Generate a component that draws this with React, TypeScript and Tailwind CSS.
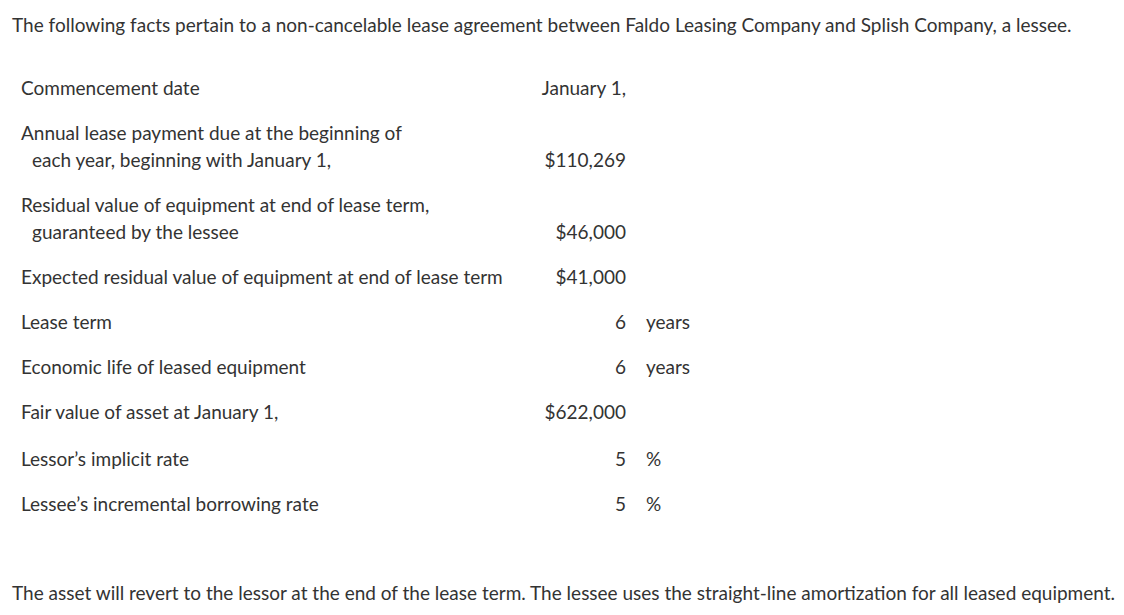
import React from "react";

type Row = {
  label: string[];
  value: string;
  unit?: string;
  extra?: boolean;
};

const rows: Row[] = [
  { label: ["Commencement date"], value: "January 1," },
  { label: ["Annual lease payment due at the beginning of", "each year, beginning with January 1,"], value: "$110,269" },
  { label: ["Residual value of equipment at end of lease term,", "guaranteed by the lessee"], value: "$46,000" },
  { label: ["Expected residual value of equipment at end of lease term"], value: "$41,000" },
  { label: ["Lease term"], value: "6", unit: "years" },
  { label: ["Economic life of leased equipment"], value: "6", unit: "years" },
  { label: ["Fair value of asset at January 1,"], value: "$622,000" },
  { label: ["Lessor\u2019s implicit rate"], value: "5", unit: "%", extra: true },
  { label: ["Lessee\u2019s incremental borrowing rate"], value: "5", unit: "%" },
];

const App = () => {
  return (
    <div className="w-[1124px] h-[615px] bg-white text-[#333333] text-[19px] leading-[27px] font-['Lato','Liberation_Sans',sans-serif] px-3 pt-[11px]">
      <p className="whitespace-nowrap">
        The following facts pertain to a non-cancelable lease agreement between Faldo Leasing Company and Splish Company, a lessee.
      </p>

      {/* Facts table */}
      <table className="mt-[27px] ml-[9px] border-collapse">
        <tbody>
          {rows.map((r, i) => (
            <tr key={i}>
              <td className={`align-bottom pb-[9px] w-[515px] ${r.extra ? "pt-[11px]" : "pt-[9px]"}`}>
                {r.label.map((l, j) => (
                  <div key={j} className={j > 0 ? "pl-[11px]" : ""}>
                    {l}
                  </div>
                ))}
              </td>
              <td className="align-bottom py-[9px] text-right w-[90px]">{r.value}</td>
              <td className="align-bottom py-[9px] pl-[20px]">{r.unit}</td>
            </tr>
          ))}
        </tbody>
      </table>

      <p className="mt-[53px] whitespace-nowrap">
        The asset will revert to the lessor at the end of the lease term. The lessee uses the straight-line amortization for all leased equipment.
      </p>
    </div>
  );
};

export default App;
